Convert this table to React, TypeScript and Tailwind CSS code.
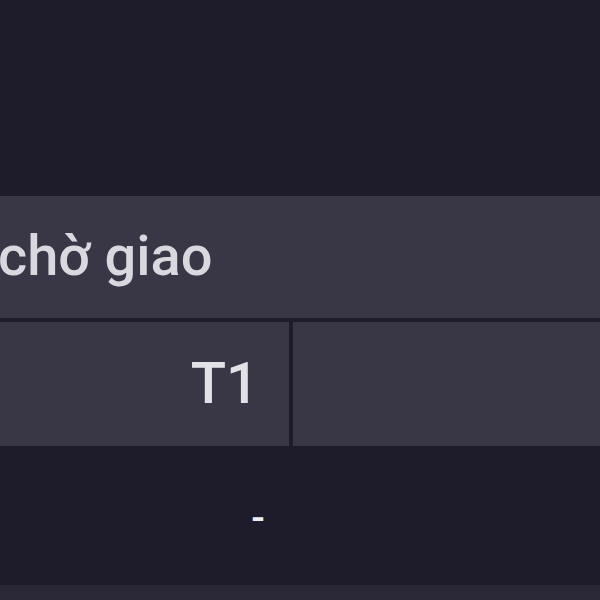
import React from 'react';

const App: React.FC = () => {
  return (
    <div className="w-[600px] h-[600px] overflow-hidden bg-[#1e1c2a] flex flex-col font-['Roboto','Inter',sans-serif]">
      <div className="h-[196px] shrink-0" />

      {/* Header row */}
      <div className="h-[122px] shrink-0 bg-[#393745] flex items-center">
        <span className="-ml-[2px] text-[56px] leading-none font-medium text-[#d9d8de] whitespace-nowrap -mt-[2px]">chờ giao</span>
      </div>

      <div className="h-[4px] shrink-0 bg-[#1f1d2b]" />

      {/* Data row */}
      <div className="h-[124px] shrink-0 bg-[#393745] flex">
        <div className="w-[293px] flex items-center justify-end pr-[30px] border-r-4 border-[#1f1d2b]">
          <span className="text-[58px] leading-none font-medium text-[#e2e2e6] -mt-[2px]">T1</span>
        </div>
        <div className="flex-1" />
      </div>

      {/* Empty area */}
      <div className="h-[139px] shrink-0 flex">
        <div className="w-[516px] flex items-center justify-center">
          <span className="text-[40px] leading-none font-medium text-[#eeeeee] mt-[6px]">-</span>
        </div>
      </div>

      <div className="flex-1 bg-[#2a2837]" />
    </div>
  );
};

export default App;
